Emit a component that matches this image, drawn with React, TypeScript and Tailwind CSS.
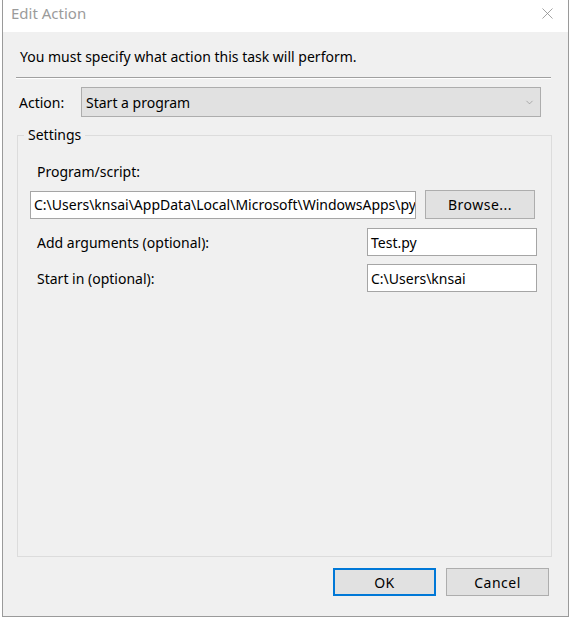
import { ChevronDown, X } from "lucide-react";

// Windows 10 "Edit Action" dialog (Task Scheduler)
const font = { fontFamily: '"Noto Sans", "Open Sans", sans-serif' };

function TextBox({ value, className }: { value: string; className: string }) {
  return (
    <div
      className={`h-[28px] bg-white border border-[#a5a5a5] flex items-center px-[3px] overflow-hidden whitespace-nowrap text-[14px] text-black ${className}`}
    >
      {value}
    </div>
  );
}

function Button({ label, primary, className }: { label: string; primary?: boolean; className: string }) {
  return (
    <button
      className={`bg-[#e1e1e1] flex items-center justify-center text-[14px] text-black tracking-[0.5px] ${
        primary ? "border-2 border-[#0078d7]" : "border border-[#adadad]"
      } ${className}`}
    >
      {label}
    </button>
  );
}

export default function App() {
  return (
    <div className="w-[572px] h-[618px] bg-white overflow-hidden" style={font}>
      <div className="ml-[2px] w-[567px] h-[617px] border-x border-b border-[#9a9a9a] flex flex-col">
        {/* title bar */}
        <div className="h-[32px] bg-white flex items-center justify-between shrink-0">
          <span className="pl-[8px] -mt-[6px] text-[15px] text-[#9b9b9b]">Edit Action</span>
          <X size={19} strokeWidth={1} className="mr-[11px] -mt-[6px] text-[#8a8a8a]" />
        </div>

        {/* body */}
        <div className="flex-1 bg-[#f0f0f0] flex flex-col">
          <p className="mt-[15px] ml-[17px] text-[14px] leading-[20px] text-black">
            You must specify what action this task will perform.
          </p>
          <div className="mt-[10px] ml-[13px] w-[535px] h-[2px] border-t border-[#a0a0a0] border-b border-b-white" />

          <div className="mt-[8px] ml-[16px] flex items-center">
            <span className="w-[62px] text-[14px] text-black">Action:</span>
            <div className="w-[460px] h-[30px] bg-[#e1e1e1] border border-[#adadad] flex items-center justify-between pl-[4px] pr-[5px] text-[14px] text-black">
              <span>Start a program</span>
              <ChevronDown size={11} strokeWidth={1.2} className="text-[#7a7a7a]" />
            </div>
          </div>

          <fieldset className="mt-[9px] ml-[14px] w-[535px] h-[431px] border border-[#dcdcdc] px-[12px]">
            <legend className="-ml-[6px] px-[4px] text-[14px] leading-[18px] text-black">Settings</legend>
            <div className="mt-[18px] ml-[7px] text-[14px] leading-[20px] text-black">Program/script:</div>
            <div className="mt-[8px] flex items-center">
              <TextBox value="C:\Users\knsai\AppData\Local\Microsoft\WindowsApps\py" className="w-[386px]" />
              <Button label="Browse..." className="ml-[9px] w-[110px] h-[29px]" />
            </div>
            <div className="mt-[9px] flex items-center justify-between">
              <span className="ml-[7px] text-[14px] text-black">Add arguments (optional):</span>
              <TextBox value="Test.py" className="w-[170px] mr-[2px]" />
            </div>
            <div className="mt-[8px] flex items-center justify-between">
              <span className="ml-[7px] text-[14px] text-black">Start in (optional):</span>
              <TextBox value="C:\Users\knsai" className="w-[170px] mr-[2px]" />
            </div>
          </fieldset>

          <div className="mt-[11px] flex justify-end gap-[10px] pr-[19px]">
            <Button label="OK" primary className="w-[103px] h-[28px]" />
            <Button label="Cancel" className="w-[103px] h-[28px]" />
          </div>
        </div>
      </div>
    </div>
  );
}
